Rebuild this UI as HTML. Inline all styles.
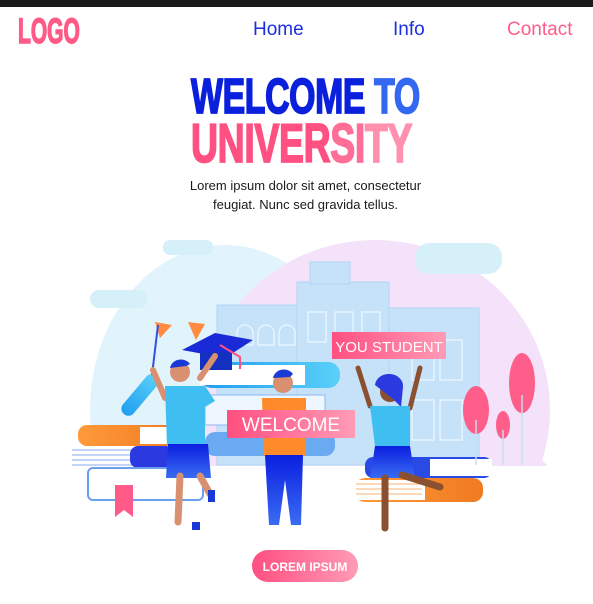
<!DOCTYPE html>
<html><head><meta charset="utf-8"><style>
html,body{margin:0;padding:0;width:593px;height:604px;overflow:hidden;background:#fff;font-family:"Liberation Sans",sans-serif;position:relative}
.bar{position:absolute;left:0;top:0;width:593px;height:7px;background:#1a1a1a}
.abs{position:absolute;white-space:nowrap}
.logo{left:18px;top:12px;font-size:35px;font-weight:bold;color:#ff5a86;transform:scaleX(.6);transform-origin:0 0;-webkit-text-stroke:1.5px #ff5a86}
.nav{top:19px;font-size:19px}
.t1{left:191px;top:69px;font-size:49px;font-weight:bold;transform:scaleX(.69);transform-origin:0 0;color:#0a20dc;-webkit-text-stroke:1.8px #0a20dc;letter-spacing:-0.5px}
.t2{left:191px;top:111px;font-size:55px;font-weight:bold;transform:scaleX(.68);transform-origin:0 0;color:#ff5082;-webkit-text-stroke:1.8px #ff5082;letter-spacing:-0.5px}
.p{left:9px;width:593px;text-align:center;font-size:13px;color:#1a1a1a;line-height:19px;top:176px;white-space:normal}
</style></head><body>
<div class="bar"></div>
<div class="abs logo">LOGO</div>
<div class="abs nav" style="left:253px;color:#1b2ee0">Home</div>
<div class="abs nav" style="left:393px;color:#1b2ee0">Info</div>
<div class="abs nav" style="left:507px;color:#ff5c8a">Contact</div>
<div class="abs t1">WELCOME <span style="color:#3468f0;-webkit-text-stroke:1.8px #3468f0">TO</span></div>
<div class="abs t2">UNIVER<span style="color:#ff6e96;-webkit-text-stroke:1.8px #ff6e96">SI</span><span style="color:#ff90ae;-webkit-text-stroke:1.8px #ff90ae">TY</span></div>
<div class="abs p">Lorem ipsum dolor sit amet, consectetur<br>feugiat. Nunc sed gravida tellus.</div>
<svg class="abs" style="left:0;top:0" width="593" height="604" viewBox="0 0 593 604">
<defs>
<linearGradient id="pk" x1="0" x2="1"><stop offset="0" stop-color="#ff4f80"/><stop offset="1" stop-color="#ff9bb6"/></linearGradient>
<linearGradient id="bl" x1="0" x2="0" y1="0" y2="1"><stop offset="0" stop-color="#0a1fe0"/><stop offset="1" stop-color="#3a6cf2"/></linearGradient>
<linearGradient id="cy" x1="0" x2="1"><stop offset="0" stop-color="#1e9ef0"/><stop offset="1" stop-color="#5ad0f8"/></linearGradient>
<linearGradient id="or" x1="0" x2="1"><stop offset="0" stop-color="#ff9a3a"/><stop offset="1" stop-color="#f07a20"/></linearGradient>
<clipPath id="cl"><rect x="0" y="230" width="593" height="236"/></clipPath>
</defs>
<g clip-path="url(#cl)">
<ellipse cx="225" cy="410" rx="135" ry="165" fill="#e2f4fb"/>
<ellipse cx="375" cy="410" rx="175" ry="170" fill="#f3e2fa"/>
<polygon points="500,420 548,466 480,466" fill="#f3e2fa"/>
</g>
<g fill="#d6f0fa"><rect x="163" y="240" width="50" height="15" rx="7"/><rect x="90" y="290" width="58" height="18" rx="9"/><rect x="415" y="243" width="87" height="31" rx="14"/></g>
<g fill="#c6e2f8" stroke="#b0d4f4" stroke-width="1">
<rect x="217" y="305" width="80" height="160"/><rect x="297" y="282" width="92" height="183"/><rect x="389" y="308" width="90" height="157"/>
<rect x="310" y="262" width="40" height="22"/>
</g>
<g fill="none" stroke="#e6f4ff" stroke-width="1.5">
<path d="M237 345v-12a8 8 0 0 1 16 0v12zM258 345v-12a8 8 0 0 1 16 0v12zM279 345v-12a8 8 0 0 1 16 0v12z"/>
<rect x="308" y="312" width="18" height="30"/><rect x="335" y="312" width="18" height="30"/><rect x="362" y="312" width="18" height="30"/>
<rect x="412" y="340" width="22" height="40"/><rect x="440" y="340" width="22" height="40"/><rect x="412" y="400" width="22" height="40"/><rect x="440" y="400" width="22" height="40"/>
</g>
<rect x="200" y="362" width="140" height="26" rx="12" fill="url(#cy)"/>
<rect x="200" y="365" width="105" height="20" fill="#fff"/>
<rect x="205" y="395" width="120" height="30" fill="#eef6ff" stroke="#8ab8f0"/>
<rect x="205" y="432" width="130" height="24" rx="10" fill="#6aaaf0"/>
<rect x="78" y="425" width="104" height="21" rx="9" fill="url(#or)"/>
<rect x="140" y="427" width="40" height="17" fill="#fff"/>
<rect x="72" y="446" width="100" height="22" fill="#fff"/>
<g stroke="#8aa8f0" stroke-width="1"><path d="M72 450h72M72 455h72M72 460h72M72 465h72"/></g>
<rect x="130" y="446" width="50" height="22" rx="8" fill="#2a3ae0"/>
<rect x="88" y="468" width="115" height="32" rx="5" fill="#fff" stroke="#6aa0ee" stroke-width="2"/>
<polygon points="115,485 133,485 133,517 124,510 115,517" fill="#ff5a88"/>
<rect x="365" y="457" width="127" height="21" rx="8" fill="#2a4ae6"/>
<rect x="430" y="459" width="62" height="17" fill="#fff"/>
<rect x="355" y="478" width="128" height="24" rx="10" fill="url(#or)"/>
<rect x="355" y="480" width="70" height="20" fill="#fff"/>
<g stroke="#f5b070" stroke-width="1"><path d="M356 484h66M356 489h66M356 494h66"/></g>
<rect x="115" y="388" width="50" height="14" rx="7" transform="rotate(-50 140 395)" fill="url(#cy)"/>
<polygon points="155,322 172,325 160,338" fill="#ff8a40"/><path d="M158 325l-6 50" stroke="#3050e0" stroke-width="2"/>
<polygon points="188,322 205,324 196,340" fill="#ff8a40"/>
<polygon points="182,350 215,333 253,340 225,358" fill="#1a2ad6"/>
<rect x="200" y="352" width="32" height="18" fill="#1430c0"/>
<path d="M220 345l20 12v12" stroke="#ff4f80" stroke-width="2" fill="none"/>
<path d="M153 370l12 28M200 378l15 -22" stroke="#d99070" stroke-width="6" stroke-linecap="round"/>
<circle cx="180" cy="372" r="10" fill="#d99070"/><path d="M170 368a11 10 0 0 1 20 -4l-4 2z" fill="#1a3ad8"/>
<path d="M165 386h40l10 15-10 6v40h-38z" fill="#3fbef2"/>
<path d="M168 444h40l3 34h-45z" fill="url(#bl)"/>
<path d="M180 476l-2 46M200 476l10 18" stroke="#d99070" stroke-width="7" stroke-linecap="round"/>
<rect x="208" y="490" width="7" height="12" fill="#1a3ad8"/><rect x="192" y="522" width="8" height="8" fill="#1a3ad8"/>
<circle cx="283" cy="383" r="10" fill="#d99070"/><path d="M273 378a11 10 0 0 1 20 -4l-3 3z" fill="#1a3ad8"/>
<path d="M262 398h44v58h-42z" fill="#ff8a2a"/>
<path d="M265 455h38l-2 70h-10l-6 -45-6 45h-10z" fill="url(#bl)"/>
<rect x="227" y="410" width="128" height="28" fill="url(#pk)"/>
<text x="291" y="431" text-anchor="middle" font-family="Liberation Sans" font-size="19" fill="#fff">WELCOME</text>
<path d="M358 368l12 38M420 368l-10 40" stroke="#8a5030" stroke-width="5" stroke-linecap="round"/>
<circle cx="390" cy="392" r="10" fill="#8a5030"/><path d="M375 385a14 12 0 0 1 28 2l-2 20-8 -8z" fill="#2a3ae0"/>
<path d="M370 406h40v40h-35z" fill="#3fbef2"/>
<path d="M375 446h35l5 32h-45z" fill="url(#bl)"/>
<path d="M385 478l0 50M402 475l38 12" stroke="#8a5030" stroke-width="7" stroke-linecap="round"/>
<rect x="332" y="332" width="114" height="27" fill="url(#pk)"/>
<text x="389" y="352" text-anchor="middle" font-family="Liberation Sans" font-size="15" fill="#fff">YOU STUDENT</text>
<g fill="#ff5e8a"><ellipse cx="476" cy="410" rx="13" ry="24"/><ellipse cx="522" cy="383" rx="13" ry="30"/><ellipse cx="503" cy="425" rx="7" ry="14"/></g>
<path d="M476 420v45M522 395v70M503 430v35" stroke="#c8def2" stroke-width="1.5"/>
<rect x="252" y="550" width="106" height="32" rx="16" fill="url(#pk)"/>
<text x="305" y="571" text-anchor="middle" font-family="Liberation Sans" font-weight="bold" font-size="12" fill="#fff">LOREM IPSUM</text>
</svg>
</body></html>
